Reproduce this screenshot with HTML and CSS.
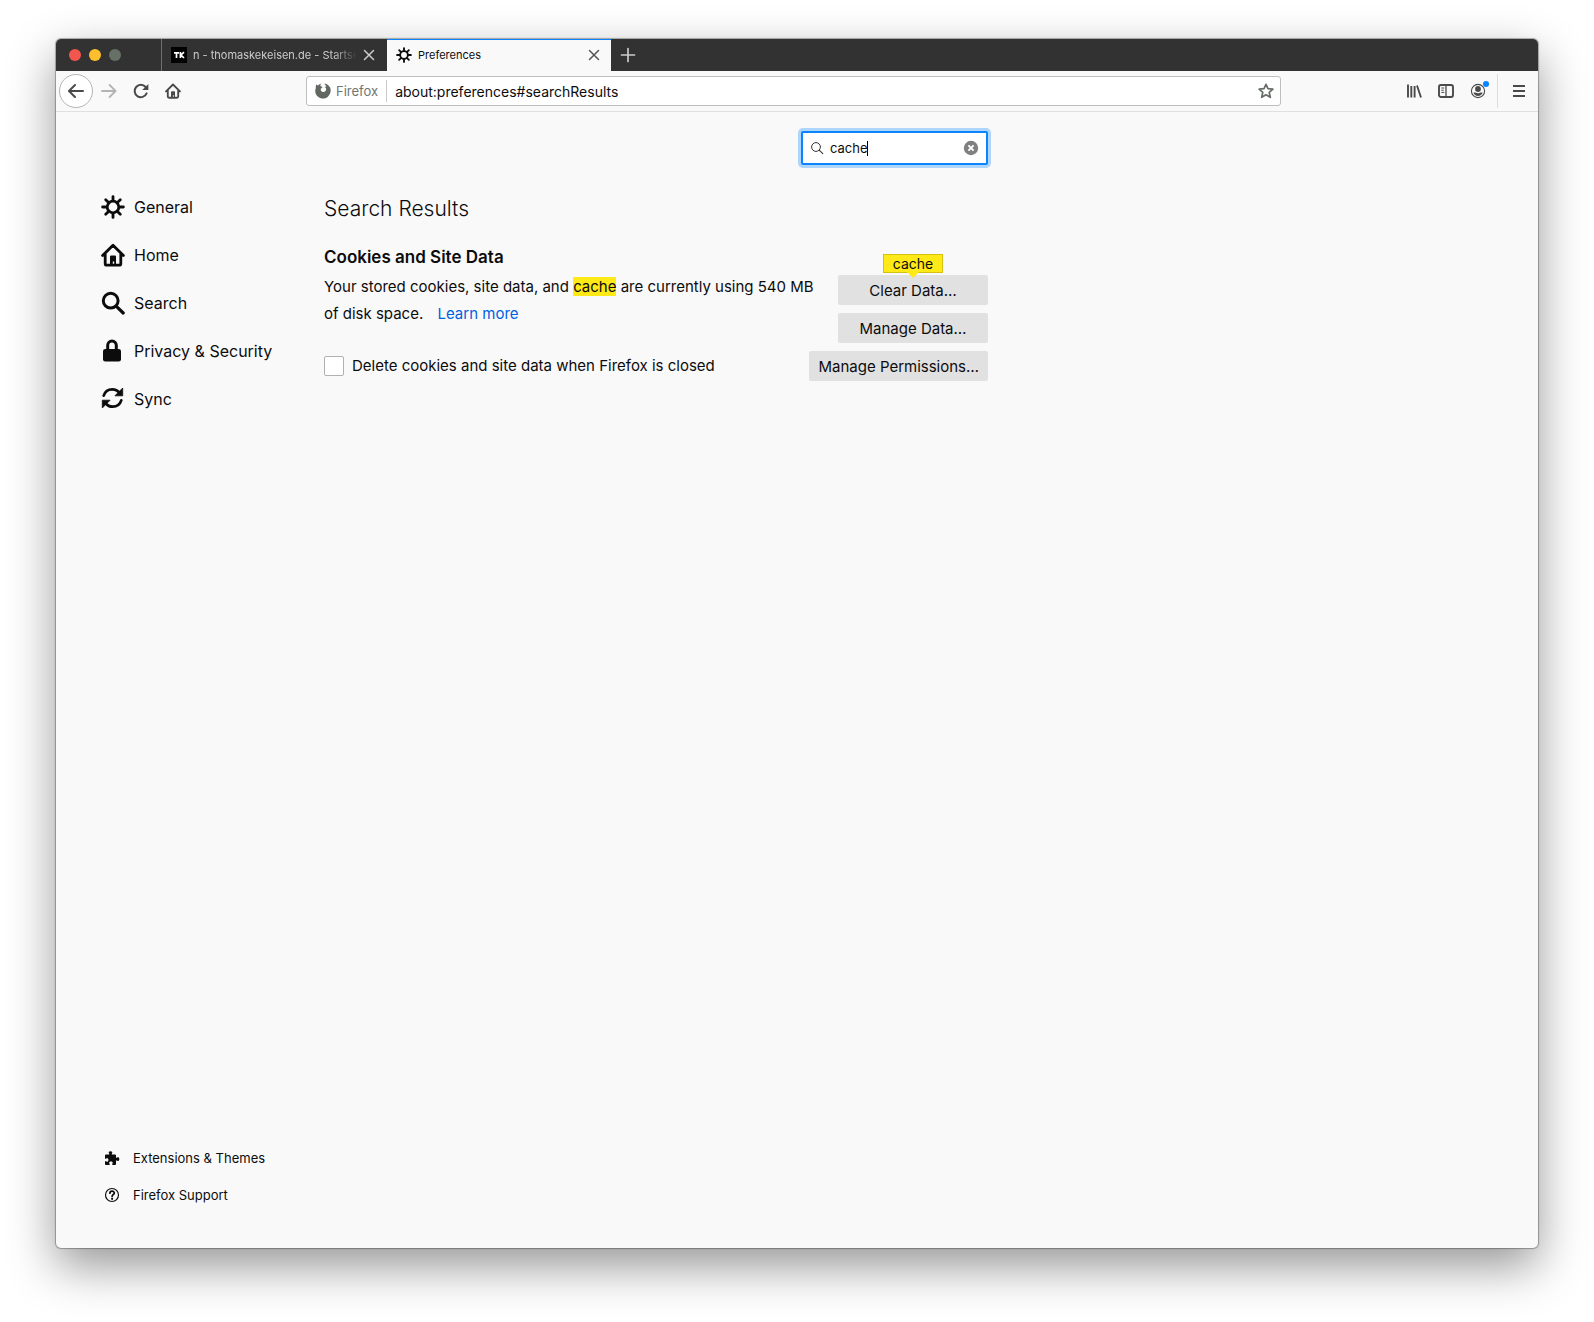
FILE: index.html
```html
<!DOCTYPE html>
<html lang="en">
<head>
<meta charset="utf-8">
<title>Preferences</title>
<link rel="stylesheet" href="styles.css">
</head>
<body>
<svg class="sprite" aria-hidden="true">
  <symbol id="gear" viewBox="0 0 24 24">
    <circle cx="12" cy="12" r="5.8" fill="none" stroke="currentColor" stroke-width="2.8"/>
    <path d="M12 1.6v4M12 18.4v4M1.6 12h4M18.4 12h4M4.7 4.7l2.6 2.6M16.7 16.7l2.6 2.6M4.7 19.3l2.6-2.6M16.7 7.3l2.6-2.6" fill="none" stroke="currentColor" stroke-width="2.8" stroke-linecap="round"/>
  </symbol>
  <symbol id="house" viewBox="0 0 24 24">
    <path d="M1.6 12.6L12 2.2l10.4 10.4M4.2 11v9.4q0 1.8 1.8 1.8h12q1.8 0 1.8-1.8V11" fill="none" stroke="currentColor" stroke-width="2.8" stroke-linecap="round" stroke-linejoin="round"/>
    <path d="M9 22v-8.400q0-1.200 1.200-1.200h3.600q1.200 0 1.200 1.200V22h-1.800v-3.600h-1.400V22z" fill="currentColor"/>
  </symbol>
  <symbol id="close" viewBox="0 0 16 16">
    <path d="M3.500 3.500l9 9M12.500 3.500l-9 9" fill="none" stroke="currentColor" stroke-width="1.500" stroke-linecap="round"/>
  </symbol>
</svg>
<div class="window">
  <header class="tabbar">
    <div class="lights"><span class="light red"></span><span class="light yellow"></span><span class="light gray"></span></div>
    <div class="tab">
      <svg class="icon16" viewBox="0 0 16 16" aria-hidden="true"><rect width="16" height="16" fill="#000"/><path d="M3 5.800h5M5.500 5.800V11M9.400 5v6M13 5.200L10 8l3 3" fill="none" stroke="#fff" stroke-width="1.700"/></svg>
      <span class="tab-title faded">n - thomaskekeisen.de - Startse</span>
      <button class="plain tab-close" aria-label="Close tab"><svg class="icon16"><use href="#close"/></svg></button>
    </div>
    <div class="tab active">
      <svg class="icon16" aria-hidden="true"><use href="#gear"/></svg>
      <span class="tab-title">Preferences</span>
      <button class="plain tab-close" aria-label="Close tab"><svg class="icon16"><use href="#close"/></svg></button>
    </div>
    <button class="plain new-tab" aria-label="New tab"><svg class="icon16" viewBox="0 0 16 16"><path d="M8 1.500v13M1.500 8h13" stroke="currentColor" stroke-width="1.700" stroke-linecap="round"/></svg></button>
  </header>
  <div class="toolbar">
    <div class="nav-buttons">
      <button class="plain back" aria-label="Back"><svg class="icon16" viewBox="0 0 16 16"><path d="M15 7H3.414l4.293-4.293a1 1 0 0 0-1.414-1.414l-6 6a1 1 0 0 0 0 1.414l6 6a1 1 0 0 0 1.414-1.414L3.414 9H15a1 1 0 0 0 0-2z" fill="currentColor"/></svg></button>
      <button class="plain tool" aria-label="Forward" disabled><svg class="icon16" viewBox="0 0 16 16"><path d="M1 8h13.400M8.600 2l6 6-6 6" fill="none" stroke="currentColor" stroke-width="1.800" stroke-linecap="round" stroke-linejoin="round"/></svg></button>
      <button class="plain tool" aria-label="Reload"><svg class="icon16" viewBox="0 0 16 16"><path d="M13.600 10.400A6.200 6.200 0 1 1 12.600 4" fill="none" stroke="currentColor" stroke-width="2" stroke-linecap="round"/><path d="M15.400.9v6H9.200z" fill="currentColor"/></svg></button>
      <button class="plain tool" aria-label="Home"><svg class="icon16"><use href="#house"/></svg></button>
    </div>
    <div class="urlbar">
      <svg class="icon16 brand" viewBox="0 0 16 16" aria-hidden="true"><path d="M1.200 1.300C1.700 2 2.200 2.300 3 2.400 3.900 1.500 5 .9 6.300.6 5.600 1.400 5.300 2.200 5.400 3c.5.6 1.500.6 2.100.9-.1.9-1.400 1.200-1.800 1.900.1.8 0 1.600.5 2.200.6.8 1.600 1.200 2.700 1 1.600-.3 2.500-1.700 2.200-3.200C10.900 4.700 10 4.200 9.500 4c.6-.4 1.300-.4 1.900-.1C11 2.600 10.300 1.400 9.200.4c3 .5 5.200 2.200 6.100 4.600 1 3-.1 7-2.700 9-2.800 2.200-7 2-9.600-.2C.3 11.600-.4 8 .8 5 .7 3.700.8 2.500 1.200 1.300z" fill="currentColor"/></svg>
      <span class="identity">Firefox</span>
      <input class="url" type="text" aria-label="Address" value="about:preferences#searchResults">
      <button class="plain star" aria-label="Bookmark this page"><svg class="icon16" viewBox="0 0 16 16"><path d="M8 1.300l2 4.400 4.900.5-3.700 3.200 1.100 4.900L8 11.800l-4.300 2.500 1.100-4.900L1.100 6.200l4.900-.5z" fill="none" stroke="currentColor" stroke-width="1.700" stroke-linejoin="round"/></svg></button>
    </div>
    <div class="tools">
      <button class="plain tool" aria-label="Library"><svg class="icon16" viewBox="0 0 16 16"><path d="M2 1.500v13M5.300 3v11.500M8.600 3v11.500M11 2.500l4 12" fill="none" stroke="currentColor" stroke-width="1.900"/></svg></button>
      <button class="plain tool" aria-label="Sidebars"><svg class="icon16" viewBox="0 0 16 16"><rect x="1" y="2" width="14" height="12" rx="2" fill="none" stroke="currentColor" stroke-width="1.900"/><path d="M8 2v12" stroke="currentColor" stroke-width="1.300"/><path d="M3.300 5h3M3.300 7.200h2.400M3.300 9.400h3" stroke="currentColor" stroke-width="1"/></svg></button>
      <button class="plain tool account" aria-label="Account"><svg class="icon16" viewBox="0 0 16 16"><circle cx="8" cy="8" r="6.600" fill="none" stroke="currentColor" stroke-width="1.100"/><circle cx="8" cy="6" r="2.900" fill="currentColor"/><path d="M3.400 9.600h1.900c1.500 1 3.900 1 5.400 0h1.900A5 5 0 0 1 8 13a5 5 0 0 1-4.600-3.400z" fill="currentColor"/></svg><span class="dot"></span></button>
      <span class="divider"></span>
      <button class="plain tool" aria-label="Open menu"><svg class="icon16" viewBox="0 0 16 16"><path d="M2 3h12M2 8h12M2 13h12" stroke="currentColor" stroke-width="2"/></svg></button>
    </div>
  </div>
  <div class="page">
    <nav class="sidebar">
      <ul class="categories">
        <li><a href="#general"><svg class="icon24"><use href="#gear"/></svg>General</a></li>
        <li><a href="#home"><svg class="icon24"><use href="#house"/></svg>Home</a></li>
        <li><a href="#search"><svg class="icon24" viewBox="0 0 24 24"><circle cx="9.700" cy="9.700" r="7.400" fill="none" stroke="currentColor" stroke-width="3"/><path d="M15.400 15.400l6.800 6.600" stroke="currentColor" stroke-width="3.200" stroke-linecap="round"/></svg>Search</a></li>
        <li><a href="#privacy"><svg class="icon24" viewBox="0 0 24 24"><path d="M6.700 12V6.300a4.300 4.300 0 0 1 8.600 0V12" fill="none" stroke="currentColor" stroke-width="3"/><rect x="2" y="10" width="18" height="12.500" rx="2.300" fill="currentColor"/></svg>Privacy &amp; Security</a></li>
        <li><a href="#sync"><svg class="icon24" viewBox="0 0 24 24"><path d="M2.700 8.600C4 4.600 7.300 2.300 11.200 2.300c3 0 5.500 1.200 7.200 3.600M20.300 13.400c-1.300 4-4.600 6.300-8.500 6.300-3 0-5.500-1.200-7.200-3.600" fill="none" stroke="currentColor" stroke-width="2.700" stroke-linecap="round"/><path d="M21.700 1v7.800h-7.800zM1.300 21V13.200h7.800z" fill="currentColor" stroke="currentColor" stroke-width=".8" stroke-linejoin="round"/></svg>Sync</a></li>
      </ul>
      <ul class="support">
        <li><a href="#extensions"><svg class="icon16" viewBox="0 0 16 16"><path d="M1 5.500q0-1 1-1h3.200V3.600C4.600 3 4.600 2.500 4.900 1.800 5.300.9 7.700.9 8.100 1.800c.3.700.3 1.200-.3 1.800v.9H11q1 0 1 1v2.300h.8c.6-.6 1.300-.6 1.900-.2.900.600.900 2.600 0 3.200-.6.400-1.300.4-1.900-.2H12V14q0 1-1 1H8.300v-1.300c.6-.7.500-1.400.100-1.800-.6-.6-2.300-.6-2.900 0-.4.4-.5 1.100.1 1.800V15H2q-1 0-1-1v-2.700h1c.7.600 1.400.5 1.900.1.700-.6.700-2.200 0-2.800-.5-.4-1.200-.5-1.900.1H1z" fill="currentColor"/></svg>Extensions &amp; Themes</a></li>
        <li><a href="#support"><svg class="icon16" viewBox="0 0 16 16"><circle cx="8" cy="8" r="6.500" fill="none" stroke="currentColor" stroke-width="1.200"/><path d="M5.900 6.200c0-2.800 4.400-2.600 4.400-.2C10.300 7.600 8.100 7.500 8.100 9.400" fill="none" stroke="currentColor" stroke-width="1.700" stroke-linecap="round"/><circle cx="8.100" cy="11.800" r="1.100" fill="currentColor"/></svg>Firefox Support</a></li>
      </ul>
    </nav>
    <main class="content">
      <div class="search-row">
        <div class="search">
          <svg class="search-icon" viewBox="0 0 14 14" aria-hidden="true"><circle cx="6" cy="6" r="4.400" fill="none" stroke="currentColor" stroke-width="1"/><path d="M9.200 9.200l3.600 3.400" stroke="currentColor" stroke-width="1.100" stroke-linecap="round"/></svg>
          <input class="search-input" type="text" aria-label="Find in Preferences" value="cache">
          <span class="caret"></span>
          <button class="plain clear" aria-label="Clear"><svg class="icon16" viewBox="0 0 16 16"><circle cx="8" cy="8" r="7.200" fill="#808080"/><path d="M5.400 5.400l5.200 5.200M10.600 5.400l-5.200 5.200" stroke="#fff" stroke-width="1.900"/></svg></button>
        </div>
      </div>
      <h1>Search Results</h1>
      <section class="group">
        <h2>Cookies and Site Data</h2>
        <div class="row">
          <p>Your stored cookies, site data, and <mark>cache</mark> are currently using 540 MB of disk space. <a class="learn" href="#learn">Learn more</a></p>
          <div class="actions">
            <div class="tip-anchor"><button class="action">Clear Data…</button><span class="tip">cache</span></div>
            <button class="action">Manage Data…</button>
          </div>
        </div>
        <div class="row last">
          <label class="check"><input type="checkbox">Delete cookies and site data when Firefox is closed</label>
          <button class="action">Manage Permissions…</button>
        </div>
      </section>
    </main>
  </div>
</div>
</body>
</html>
```
FILE: styles.css
```css
* { box-sizing: border-box; }

body {
  margin: 0;
  min-height: 100vh;
  padding: 39px 56px 74px;
  display: flex;
  background: #fff;
  color: #0c0c0d;
  font-family: Inter, "Liberation Sans", sans-serif;
  font-size: 15px;
}

ul { list-style: none; margin: 0; padding: 0; }
a { color: inherit; text-decoration: none; }
input { font-family: inherit; color: inherit; }
.sprite { position: absolute; width: 0; height: 0; }
.icon16 { width: 16px; height: 16px; flex: none; display: block; }
.icon24 { width: 24px; height: 24px; flex: none; display: block; }

.plain {
  border: 0;
  padding: 0;
  background: none;
  color: inherit;
  font: inherit;
  display: flex;
  align-items: center;
  justify-content: center;
}

.window {
  flex: 1;
  min-width: 0;
  display: flex;
  flex-direction: column;
  background: #f9f9fa;
  border-radius: 5px;
  overflow: hidden;
  box-shadow: 0 0 1px 1px rgba(0, 0, 0, .3), 0 18px 48px rgba(0, 0, 0, .42);
}

/* Tab strip */
.tabbar {
  display: flex;
  height: 32px;
  background: #323232;
  color: #ccc;
  font-size: 11px;
}
.lights {
  display: flex;
  align-items: center;
  gap: 8px;
  width: 106px;
  padding-left: 13px;
  border-right: 1px solid #707070;
}
.light { width: 12px; height: 12px; border-radius: 50%; }
.red { background: #f2564d; }
.yellow { background: #fdbf2d; }
.gray { background: #667066; }
.tab {
  display: flex;
  align-items: center;
  width: 225px;
  padding: 0 10px 0 9px;
}
.tab-title { flex: 1; margin-left: 6px; white-space: nowrap; overflow: hidden; }
.faded { mask-image: linear-gradient(to left, transparent, #000 24px); }
.tab-close { width: 16px; height: 16px; margin-left: 4px; }
.active {
  width: 224px;
  padding-right: 9px;
  background: #f9f9fa;
  color: #0c0c0d;
  box-shadow: inset 0 1px #0a84ff;
}
.active .tab-close { color: #555; }
.new-tab { width: 34px; }

/* Navigation toolbar */
.toolbar {
  display: flex;
  align-items: center;
  height: 41px;
  padding: 0 3px;
  border-bottom: 1px solid #e0e0e1;
  color: #4a4a4a;
}
.nav-buttons { display: flex; align-items: center; width: 247px; }
.back {
  width: 34px;
  height: 34px;
  border: 1px solid #b5b5b5;
  border-radius: 50%;
  background: #fff;
}
.tool { width: 32px; height: 32px; }
.tool:disabled { color: #b4b4b5; }
.urlbar {
  flex: 1;
  min-width: 0;
  display: flex;
  align-items: center;
  height: 30px;
  padding: 0 6px 0 8px;
  border: 1px solid #bebebe;
  border-radius: 3px;
  background: #fff;
}
.brand { color: #606860; }
.identity {
  padding: 0 8px 0 5px;
  border-right: 1px solid #ccc;
  color: #707570;
  font-size: 13px;
  line-height: 22px;
}
.url {
  flex: 1;
  min-width: 0;
  border: 0;
  padding: 0 8px;
  background: none;
  color: #0c0c0d;
  font-size: 14px;
}
.star { color: #666c66; }
.tools {
  display: flex;
  align-items: center;
  justify-content: flex-end;
  width: 254px;
}
.account { position: relative; }
.dot {
  position: absolute;
  top: 6px;
  right: 5px;
  width: 6px;
  height: 6px;
  border-radius: 50%;
  background: #0a84ff;
}
.divider { width: 1px; height: 34px; margin: 0 5px 0 3px; background: #dcdcdd; }

/* Preferences page */
.page { flex: 1; display: flex; }
.sidebar {
  display: flex;
  flex-direction: column;
  justify-content: space-between;
  width: 268px;
  padding: 71px 0 35px 45px;
}
.categories a { display: flex; align-items: center; gap: 9px; height: 48px; font-size: 16px; }
.support a { display: flex; align-items: center; gap: 13px; height: 37px; padding-left: 3px; font-size: 13px; }

.content { flex: 1; min-width: 0; max-width: 664px; }
.search-row { display: flex; justify-content: flex-end; padding-top: 19px; }
.search {
  position: relative;
  display: flex;
  align-items: center;
  width: 187px;
  height: 34px;
  padding: 0 7px;
  border: 2px solid #0a84ff;
  border-radius: 2px;
  background: #fff;
  box-shadow: 0 0 0 3px #aed6fd;
}
.search-icon { width: 14px; height: 14px; flex: none; color: #333; }
.search-input { flex: 1; min-width: 0; border: 0; padding: 0 6px; background: none; font-size: 13px; outline: 0; }
.caret { position: absolute; left: 64px; top: 8px; width: 1px; height: 15px; background: #000; }

h1 { margin: 28px 0 0; font-size: 21px; font-weight: 300; line-height: 32px; }
h2 { margin: 0; font-size: 17px; font-weight: 600; line-height: 24px; }
.group { margin-top: 20px; }
.row { display: flex; justify-content: space-between; gap: 16px; }
.row p { flex: 1; min-width: 0; margin: 4px 0 0; line-height: 27px; }
.last { align-items: center; margin-top: 8px; }
mark { background: #ffe916; color: inherit; }
.learn { margin-left: 10px; color: #0060df; }
.check { display: flex; align-items: center; gap: 8px; line-height: 20px; }
.check input {
  appearance: none;
  width: 20px;
  height: 20px;
  margin: 0;
  border: 1px solid #b1b1b1;
  border-radius: 2px;
  background: #fff;
}
.actions { display: flex; flex-direction: column; gap: 8px; padding-top: 6px; }
.tip-anchor { position: relative; }
.action {
  display: block;
  min-width: 150px;
  height: 30px;
  padding: 0 9px;
  border: 0;
  border-radius: 2px;
  background: #e1e1e2;
  color: inherit;
  font: inherit;
}
.tip {
  position: absolute;
  top: -21px;
  left: 45px;
  width: 60px;
  height: 19px;
  border: 1px solid #d7c110;
  background: #ffe916;
  font-size: 14px;
  line-height: 18px;
  text-align: center;
}
.tip::after {
  content: "";
  position: absolute;
  top: 100%;
  left: 23px;
  border: 6px solid transparent;
  border-top-color: #ffe916;
  border-bottom: 0;
}
```
